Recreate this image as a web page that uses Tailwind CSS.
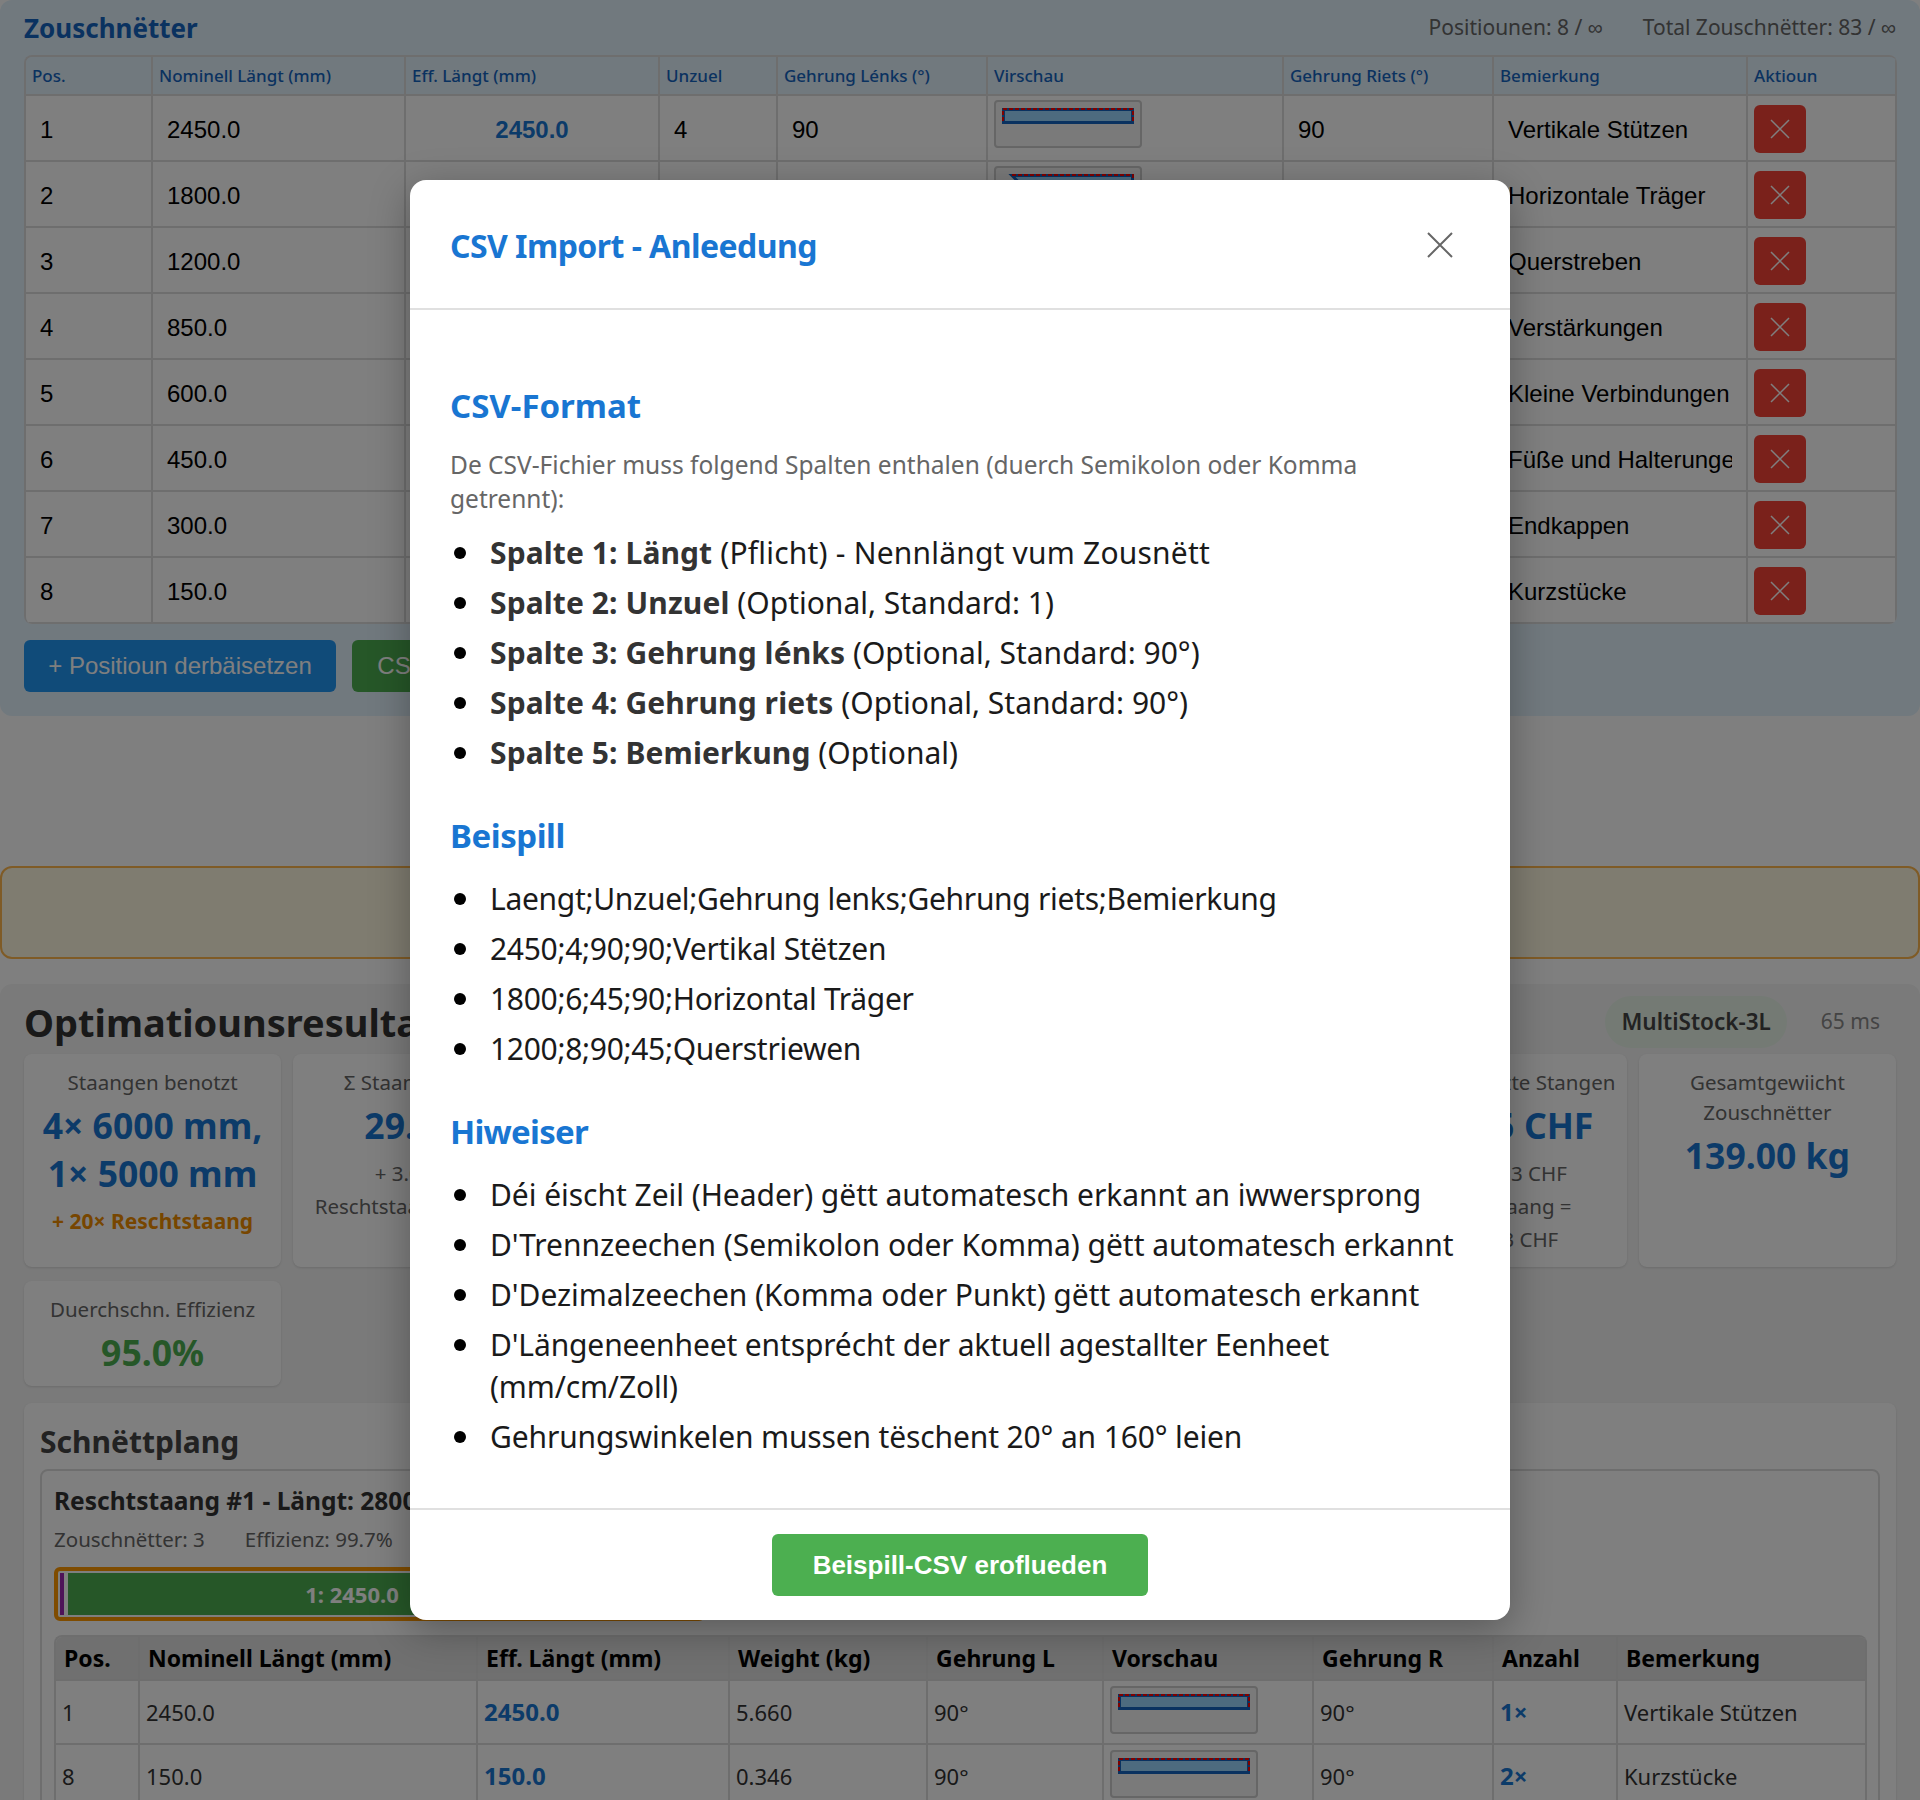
<!DOCTYPE html>
<html lang="lb">
<head>
<meta charset="UTF-8" />
<title>Zouschnëtter</title>
<script src="https://cdn.jsdelivr.net/npm/@tailwindcss/browser@4"></script>
</head>
<body class="relative h-[1800px] w-[1920px] overflow-hidden bg-white font-['Noto_Sans',sans-serif] text-[#333]">

<!-- cuts input panel -->
<section class="h-[716px] rounded-xl bg-[#e3f2fd] px-6">
  <div class="flex h-[55px] items-center justify-between">
    <h2 class="text-[26px] font-bold leading-none text-[#1565c0]">Zouschnëtter</h2>
    <div class="flex gap-10 text-[21px] text-[#666]">
      <span>Positiounen: 8 / ∞</span>
      <span>Total Zouschnëtter: 83 / ∞</span>
    </div>
  </div>
  <table class="w-[1871px] table-fixed border-separate border-spacing-0 overflow-hidden rounded-lg border-t-2 border-l-2 border-[#ddd] font-['Liberation_Sans',sans-serif] text-[24px] text-black">
    <colgroup>
      <col class="w-[127px]" /><col class="w-[253px]" /><col class="w-[254px]" /><col class="w-[118px]" /><col class="w-[210px]" /><col class="w-[296px]" /><col class="w-[210px]" /><col class="w-[254px]" /><col class="w-[149px]" />
    </colgroup>
    <thead>
      <tr class="h-[39px] bg-[#e3f2fd] text-left font-['Noto_Sans',sans-serif] text-[17px] font-medium text-[#1565c0]">
        <th class="border-r-2 border-b-2 border-[#ddd] pl-1.5 font-medium">Pos.</th>
        <th class="border-r-2 border-b-2 border-[#ddd] pl-1.5 font-medium">Nominell Längt (mm)</th>
        <th class="border-r-2 border-b-2 border-[#ddd] pl-1.5 font-medium">Eff. Längt (mm)</th>
        <th class="border-r-2 border-b-2 border-[#ddd] pl-1.5 font-medium">Unzuel</th>
        <th class="border-r-2 border-b-2 border-[#ddd] pl-1.5 font-medium">Gehrung Lénks (°)</th>
        <th class="border-r-2 border-b-2 border-[#ddd] pl-1.5 font-medium">Virschau</th>
        <th class="border-r-2 border-b-2 border-[#ddd] pl-1.5 font-medium">Gehrung Riets (°)</th>
        <th class="border-r-2 border-b-2 border-[#ddd] pl-1.5 font-medium">Bemierkung</th>
        <th class="border-r-2 border-b-2 border-[#ddd] pl-1.5 font-medium">Aktioun</th>
      </tr>
    </thead>
    <tbody class="bg-white">
      <tr class="h-[66px]">
        <td class="border-r-2 border-b-2 border-[#ddd] pl-3.5 pt-1">1</td>
        <td class="border-r-2 border-b-2 border-[#ddd] pl-3.5 pt-1">2450.0</td>
        <td class="border-r-2 border-b-2 border-[#ddd] pt-1 text-center font-bold text-[#1976d2]">2450.0</td>
        <td class="border-r-2 border-b-2 border-[#ddd] pl-3.5 pt-1">4</td>
        <td class="border-r-2 border-b-2 border-[#ddd] pl-3.5 pt-1">90</td>
        <td class="border-r-2 border-b-2 border-[#ddd] pl-1.5 pt-1 align-top">
          <div class="h-[48px] w-[148px] rounded border-2 border-[#ccc] bg-[#f5f5f5] px-[6px] pt-[6px]">
            <svg viewBox="0 0 132 16" class="block h-4 w-[132px]"><rect x="1.5" y="1.5" width="129" height="13" fill="#9bd7ff" stroke="#1565c0" stroke-width="3" /><path d="M1 13V1H131V13" fill="none" stroke="#ff0000" stroke-width="2" stroke-dasharray="4 2" /></svg>
          </div>
        </td>
        <td class="border-r-2 border-b-2 border-[#ddd] pl-3.5 pt-1">90</td>
        <td class="border-r-2 border-b-2 border-[#ddd] pl-3.5 pt-1">Vertikale Stützen</td>
        <td class="border-r-2 border-b-2 border-[#ddd] pl-1.5 pt-0.5">
          <button class="flex h-12 w-[52px] items-center justify-center rounded-md bg-[#f44336]">
            <svg viewBox="0 0 20 20" class="h-[20px] w-[20px] stroke-white stroke-[1.5]"><path d="M1 1 19 19M19 1 1 19" /></svg>
          </button>
        </td>
      </tr>
      <tr class="h-[66px]">
        <td class="border-r-2 border-b-2 border-[#ddd] pl-3.5 pt-1">2</td>
        <td class="border-r-2 border-b-2 border-[#ddd] pl-3.5 pt-1">1800.0</td>
        <td class="border-r-2 border-b-2 border-[#ddd]"></td>
        <td class="border-r-2 border-b-2 border-[#ddd]"></td>
        <td class="border-r-2 border-b-2 border-[#ddd]"></td>
        <td class="border-r-2 border-b-2 border-[#ddd] pl-1.5 pt-1 align-top">
          <div class="h-[48px] w-[148px] rounded border-2 border-[#ccc] bg-[#f5f5f5] px-[6px] pt-[6px]">
            <svg viewBox="0 0 132 16" class="block h-4 w-[132px]"><polygon points="10,1.5 130.5,1.5 130.5,14.5 23,14.5" fill="#9bd7ff" stroke="#1565c0" stroke-width="3" /><path d="M10 1H131V13" fill="none" stroke="#ff0000" stroke-width="2" stroke-dasharray="4 2" /></svg>
          </div>
        </td>
        <td class="border-r-2 border-b-2 border-[#ddd]"></td>
        <td class="border-r-2 border-b-2 border-[#ddd] pl-3.5 pt-1">Horizontale Träger</td>
        <td class="border-r-2 border-b-2 border-[#ddd] pl-1.5 pt-0.5">
          <button class="flex h-12 w-[52px] items-center justify-center rounded-md bg-[#f44336]">
            <svg viewBox="0 0 20 20" class="h-[20px] w-[20px] stroke-white stroke-[1.5]"><path d="M1 1 19 19M19 1 1 19" /></svg>
          </button>
        </td>
      </tr>
      <tr class="h-[66px]">
        <td class="border-r-2 border-b-2 border-[#ddd] pl-3.5 pt-1">3</td>
        <td class="border-r-2 border-b-2 border-[#ddd] pl-3.5 pt-1">1200.0</td>
        <td class="border-r-2 border-b-2 border-[#ddd]" colspan="5"></td>
        <td class="border-r-2 border-b-2 border-[#ddd] pl-3.5 pt-1">Querstreben</td>
        <td class="border-r-2 border-b-2 border-[#ddd] pl-1.5 pt-0.5">
          <button class="flex h-12 w-[52px] items-center justify-center rounded-md bg-[#f44336]">
            <svg viewBox="0 0 20 20" class="h-[20px] w-[20px] stroke-white stroke-[1.5]"><path d="M1 1 19 19M19 1 1 19" /></svg>
          </button>
        </td>
      </tr>
      <tr class="h-[66px]">
        <td class="border-r-2 border-b-2 border-[#ddd] pl-3.5 pt-1">4</td>
        <td class="border-r-2 border-b-2 border-[#ddd] pl-3.5 pt-1">850.0</td>
        <td class="border-r-2 border-b-2 border-[#ddd]" colspan="5"></td>
        <td class="border-r-2 border-b-2 border-[#ddd] pl-3.5 pt-1">Verstärkungen</td>
        <td class="border-r-2 border-b-2 border-[#ddd] pl-1.5 pt-0.5">
          <button class="flex h-12 w-[52px] items-center justify-center rounded-md bg-[#f44336]">
            <svg viewBox="0 0 20 20" class="h-[20px] w-[20px] stroke-white stroke-[1.5]"><path d="M1 1 19 19M19 1 1 19" /></svg>
          </button>
        </td>
      </tr>
      <tr class="h-[66px]">
        <td class="border-r-2 border-b-2 border-[#ddd] pl-3.5 pt-1">5</td>
        <td class="border-r-2 border-b-2 border-[#ddd] pl-3.5 pt-1">600.0</td>
        <td class="border-r-2 border-b-2 border-[#ddd]" colspan="5"></td>
        <td class="border-r-2 border-b-2 border-[#ddd] pl-3.5 pt-1">Kleine Verbindungen</td>
        <td class="border-r-2 border-b-2 border-[#ddd] pl-1.5 pt-0.5">
          <button class="flex h-12 w-[52px] items-center justify-center rounded-md bg-[#f44336]">
            <svg viewBox="0 0 20 20" class="h-[20px] w-[20px] stroke-white stroke-[1.5]"><path d="M1 1 19 19M19 1 1 19" /></svg>
          </button>
        </td>
      </tr>
      <tr class="h-[66px]">
        <td class="border-r-2 border-b-2 border-[#ddd] pl-3.5 pt-1">6</td>
        <td class="border-r-2 border-b-2 border-[#ddd] pl-3.5 pt-1">450.0</td>
        <td class="border-r-2 border-b-2 border-[#ddd]" colspan="5"></td>
        <td class="border-r-2 border-b-2 border-[#ddd] pl-3.5 pr-3.5 pt-1"><div class="overflow-hidden whitespace-nowrap">Füße und Halterungen</div></td>
        <td class="border-r-2 border-b-2 border-[#ddd] pl-1.5 pt-0.5">
          <button class="flex h-12 w-[52px] items-center justify-center rounded-md bg-[#f44336]">
            <svg viewBox="0 0 20 20" class="h-[20px] w-[20px] stroke-white stroke-[1.5]"><path d="M1 1 19 19M19 1 1 19" /></svg>
          </button>
        </td>
      </tr>
      <tr class="h-[66px]">
        <td class="border-r-2 border-b-2 border-[#ddd] pl-3.5 pt-1">7</td>
        <td class="border-r-2 border-b-2 border-[#ddd] pl-3.5 pt-1">300.0</td>
        <td class="border-r-2 border-b-2 border-[#ddd]" colspan="5"></td>
        <td class="border-r-2 border-b-2 border-[#ddd] pl-3.5 pt-1">Endkappen</td>
        <td class="border-r-2 border-b-2 border-[#ddd] pl-1.5 pt-0.5">
          <button class="flex h-12 w-[52px] items-center justify-center rounded-md bg-[#f44336]">
            <svg viewBox="0 0 20 20" class="h-[20px] w-[20px] stroke-white stroke-[1.5]"><path d="M1 1 19 19M19 1 1 19" /></svg>
          </button>
        </td>
      </tr>
      <tr class="h-[66px]">
        <td class="border-r-2 border-b-2 border-[#ddd] pl-3.5 pt-1">8</td>
        <td class="border-r-2 border-b-2 border-[#ddd] pl-3.5 pt-1">150.0</td>
        <td class="border-r-2 border-b-2 border-[#ddd]" colspan="5"></td>
        <td class="border-r-2 border-b-2 border-[#ddd] pl-3.5 pt-1">Kurzstücke</td>
        <td class="border-r-2 border-b-2 border-[#ddd] pl-1.5 pt-0.5">
          <button class="flex h-12 w-[52px] items-center justify-center rounded-md bg-[#f44336]">
            <svg viewBox="0 0 20 20" class="h-[20px] w-[20px] stroke-white stroke-[1.5]"><path d="M1 1 19 19M19 1 1 19" /></svg>
          </button>
        </td>
      </tr>
    </tbody>
  </table>
  <div class="mt-4 flex gap-4 font-['Liberation_Sans',sans-serif] text-[24px] text-white">
    <button class="h-[52px] w-[312px] rounded-md bg-[#2196f3]">+ Positioun derbäisetzen</button>
    <button class="h-[52px] w-[200px] rounded-md bg-[#4caf50] pr-[100px]">CSV</button>
  </div>
</section>

<!-- warning -->
<div class="mt-[150px] h-[93px] rounded-xl border-2 border-[#ffb74d] bg-[#fff8e1]"></div>

<!-- results -->
<section class="mt-[25px] rounded-xl bg-[#f5f5f5] px-6 pt-[14px]">
  <div class="flex h-[56px] items-center justify-between pb-2">
    <h2 class="text-[38px] font-bold text-[#333]">Optimatiounsresultater</h2>
    <div class="flex items-center gap-[34px] pr-4">
      <span class="rounded-full bg-[#e8f5e9] px-4 py-[9px] text-[22.5px] font-semibold text-[#444]">MultiStock-3L</span>
      <span class="text-[21px] text-[#888]">65 ms</span>
    </div>
  </div>
  <div class="grid grid-cols-7 gap-x-3 gap-y-[14px]">
    <div class="h-[213px] rounded-lg bg-white px-2 pt-[13px] text-center text-[20.5px] leading-[30px] text-[#666] shadow-sm">
      <div>Staangen benotzt</div>
      <div class="mt-1 text-[35.5px] leading-[48px] font-bold text-[#1976d2]">4× 6000 mm, 1× 5000 mm</div>
      <div class="mt-[9px] text-[21px] font-bold text-[#ef8c00]">+ 20× Reschtstaang</div>
    </div>
    <div class="h-[213px] rounded-lg bg-white px-2 pt-[13px] text-center text-[20.5px] leading-[30px] text-[#666] shadow-sm">
      <div>Σ Staange Längt</div>
      <div class="mt-1 text-[35.5px] leading-[48px] font-bold text-[#1976d2]">29.0 m</div>
      <div class="mt-2 leading-[33px]">+ 3.000 m<br />Reschtstaangen Längt</div>
    </div>
    <div class="rounded-lg bg-white shadow-sm"></div>
    <div class="rounded-lg bg-white shadow-sm"></div>
    <div class="rounded-lg bg-white shadow-sm"></div>
    <div class="h-[213px] rounded-lg bg-white px-1 pt-[13px] text-center text-[20.5px] leading-[30px] text-[#666] shadow-sm">
      <div class="whitespace-nowrap">Präise benotzte Stangen</div>
      <div class="mt-1 text-[35.5px] leading-[48px] font-bold text-[#1976d2]">1185.5 CHF</div>
      <div class="mt-2 leading-[33px]">+ 1124.13 CHF<br />Reschtstaang =<br />1564.13 CHF</div>
    </div>
    <div class="h-[213px] rounded-lg bg-white px-2 pt-[13px] text-center text-[20.5px] leading-[30px] text-[#666] shadow-sm">
      <div>Gesamtgewiicht Zouschnëtter</div>
      <div class="mt-1 text-[35.5px] leading-[48px] font-bold text-[#1976d2]">139.00 kg</div>
    </div>
    <div class="h-[105px] rounded-lg bg-white px-2 pt-[13px] text-center text-[20.5px] leading-[30px] text-[#666] shadow-sm">
      <div>Duerchschn. Effizienz</div>
      <div class="mt-1 text-[35.5px] leading-[48px] font-bold text-[#4caf50]">95.0%</div>
    </div>
  </div>

  <div class="mt-[17px] rounded-lg bg-white px-4 pt-[18px] pb-10 shadow-sm">
    <h3 class="text-[30px] leading-[42px] font-bold text-[#444]">Schnëttplang</h3>
    <div class="mt-1.5 h-[400px] rounded-lg border-2 border-[#ddd] px-3 pt-[14px]">
      <div class="text-[24.5px] leading-[32px] font-bold text-[#333]">Reschtstaang #1 - Längt: 2800 mm</div>
      <div class="mt-[7px] flex gap-10 text-[20.5px] leading-[30px] text-[#666]"><span>Zouschnëtter: 3</span><span>Effizienz: 99.7%</span></div>
      <div class="mt-[13px] flex h-[54px] w-[651px] items-stretch rounded-md border-4 border-[#ff9800] bg-white p-[2px]">
        <div class="w-[4px] bg-[#9c27b0]"></div>
        <div class="ml-1 flex w-[568px] items-center justify-center bg-[#4caf50] text-[22px] font-bold text-white">1: 2450.0</div>
      </div>
      <table class="mt-[14px] w-[1811px] table-fixed border-separate border-spacing-0 overflow-hidden rounded-lg border-t-2 border-l-2 border-[#ddd] text-[22px] text-[#333]">
        <colgroup>
          <col class="w-[84px]" /><col class="w-[338px]" /><col class="w-[252px]" /><col class="w-[198px]" /><col class="w-[176px]" /><col class="w-[210px]" /><col class="w-[180px]" /><col class="w-[124px]" /><col class="w-[249px]" />
        </colgroup>
        <thead>
          <tr class="h-[44px] bg-[#e0e0e0] text-left text-[23px] text-black">
            <th class="border-r-2 border-b-2 border-[#ddd] pl-2">Pos.</th>
            <th class="border-r-2 border-b-2 border-[#ddd] pl-2">Nominell Längt (mm)</th>
            <th class="border-r-2 border-b-2 border-[#ddd] pl-2">Eff. Längt (mm)</th>
            <th class="border-r-2 border-b-2 border-[#ddd] pl-2">Weight (kg)</th>
            <th class="border-r-2 border-b-2 border-[#ddd] pl-2">Gehrung L</th>
            <th class="border-r-2 border-b-2 border-[#ddd] pl-2">Vorschau</th>
            <th class="border-r-2 border-b-2 border-[#ddd] pl-2">Gehrung R</th>
            <th class="border-r-2 border-b-2 border-[#ddd] pl-2">Anzahl</th>
            <th class="border-r-2 border-b-2 border-[#ddd] pl-2">Bemerkung</th>
          </tr>
        </thead>
        <tbody class="bg-white">
          <tr class="h-[64px]">
            <td class="border-r-2 border-b-2 border-[#ddd] pl-1.5">1</td>
            <td class="border-r-2 border-b-2 border-[#ddd] pl-1.5">2450.0</td>
            <td class="border-r-2 border-b-2 border-[#ddd] pl-1.5 text-[24px] font-bold text-[#1976d2]">2450.0</td>
            <td class="border-r-2 border-b-2 border-[#ddd] pl-1.5">5.660</td>
            <td class="border-r-2 border-b-2 border-[#ddd] pl-1.5">90°</td>
            <td class="border-r-2 border-b-2 border-[#ddd] pl-1.5 pt-[5px] align-top">
              <div class="h-[48px] w-[148px] rounded border-2 border-[#ccc] bg-[#f5f5f5] px-[6px] pt-[6px]">
                <svg viewBox="0 0 132 16" class="block h-4 w-[132px]"><rect x="1.5" y="1.5" width="129" height="13" fill="#9bd7ff" stroke="#1565c0" stroke-width="3" /><path d="M1 13V1H131V13" fill="none" stroke="#ff0000" stroke-width="2" stroke-dasharray="4 2" /></svg>
              </div>
            </td>
            <td class="border-r-2 border-b-2 border-[#ddd] pl-1.5">90°</td>
            <td class="border-r-2 border-b-2 border-[#ddd] pl-1.5 text-[24px] font-bold text-[#1976d2]">1×</td>
            <td class="border-r-2 border-b-2 border-[#ddd] pl-1.5">Vertikale Stützen</td>
          </tr>
          <tr class="h-[64px]">
            <td class="border-r-2 border-b-2 border-[#ddd] pl-1.5">8</td>
            <td class="border-r-2 border-b-2 border-[#ddd] pl-1.5">150.0</td>
            <td class="border-r-2 border-b-2 border-[#ddd] pl-1.5 text-[24px] font-bold text-[#1976d2]">150.0</td>
            <td class="border-r-2 border-b-2 border-[#ddd] pl-1.5">0.346</td>
            <td class="border-r-2 border-b-2 border-[#ddd] pl-1.5">90°</td>
            <td class="border-r-2 border-b-2 border-[#ddd] pl-1.5 pt-[5px] align-top">
              <div class="h-[48px] w-[148px] rounded border-2 border-[#ccc] bg-[#f5f5f5] px-[6px] pt-[6px]">
                <svg viewBox="0 0 132 16" class="block h-4 w-[132px]"><rect x="1.5" y="1.5" width="129" height="13" fill="#9bd7ff" stroke="#1565c0" stroke-width="3" /><path d="M1 13V1H131V13" fill="none" stroke="#ff0000" stroke-width="2" stroke-dasharray="4 2" /></svg>
              </div>
            </td>
            <td class="border-r-2 border-b-2 border-[#ddd] pl-1.5">90°</td>
            <td class="border-r-2 border-b-2 border-[#ddd] pl-1.5 text-[24px] font-bold text-[#1976d2]">2×</td>
            <td class="border-r-2 border-b-2 border-[#ddd] pl-1.5">Kurzstücke</td>
          </tr>
        </tbody>
      </table>
    </div>
  </div>
</section>

<!-- dimming overlay and modal -->
<div class="absolute inset-0 flex justify-center bg-black/50 pt-[180px]">
  <div class="flex h-[1440px] w-[1100px] flex-col rounded-2xl bg-white shadow-[0_10px_40px_rgba(0,0,0,0.3)]">
    <div class="flex h-[130px] shrink-0 items-center justify-between border-b-2 border-[#e0e0e0] pr-[57px] pl-10">
      <h2 class="mt-[4px] text-[32px] font-bold tracking-[-0.55px] text-[#1976d2]">CSV Import - Anleedung</h2>
      <svg viewBox="0 0 26 26" class="mt-[2px] h-[26px] w-[26px] fill-none stroke-[#666] stroke-2"><path d="M1 1 25 25M25 1 1 25" /></svg>
    </div>
    <div class="flex-1 px-10 pt-[74px]">
      <h3 class="text-[33px] leading-[44px] font-bold text-[#1976d2]">CSV-Format</h3>
      <p class="mt-[20px] text-[24.5px] leading-[34px] text-[#666]">De CSV-Fichier muss folgend Spalten enthalen (duerch Semikolon oder Komma getrennt):</p>
      <ul class="mt-[16px] pl-10 text-[30px] leading-[42px] text-[#1a1a1a] *:relative *:mb-2 *:before:absolute *:before:top-[15px] *:before:left-[-36px] *:before:h-3 *:before:w-3 *:before:rounded-full *:before:bg-black">
        <li class="tracking-[0.2px]"><strong class="font-bold tracking-[0.1px] text-[#333]">Spalte 1: Längt</strong> (Pflicht) - Nennlängt vum Zousnëtt</li>
        <li><strong class="font-bold tracking-[0.1px] text-[#333]">Spalte 2: Unzuel</strong> (Optional, Standard: 1)</li>
        <li><strong class="font-bold tracking-[0.1px] text-[#333]">Spalte 3: Gehrung lénks</strong> (Optional, Standard: 90°)</li>
        <li><strong class="font-bold tracking-[0.1px] text-[#333]">Spalte 4: Gehrung riets</strong> (Optional, Standard: 90°)</li>
        <li><strong class="font-bold tracking-[0.1px] text-[#333]">Spalte 5: Bemierkung</strong> (Optional)</li>
      </ul>
      <h3 class="mt-[40px] text-[33px] leading-[44px] font-bold tracking-[-0.45px] text-[#1976d2]">Beispill</h3>
      <ul class="mt-[20px] pl-10 text-[30px] leading-[42px] tracking-[-0.3px] text-[#1a1a1a] *:relative *:mb-2 *:before:absolute *:before:top-[15px] *:before:left-[-36px] *:before:h-3 *:before:w-3 *:before:rounded-full *:before:bg-black">
        <li>Laengt;Unzuel;Gehrung lenks;Gehrung riets;Bemierkung</li>
        <li>2450;4;90;90;Vertikal Stëtzen</li>
        <li>1800;6;45;90;Horizontal Träger</li>
        <li>1200;8;90;45;Querstriewen</li>
      </ul>
      <h3 class="mt-[40px] text-[33px] leading-[44px] font-bold tracking-[-0.75px] text-[#1976d2]">Hiweiser</h3>
      <ul class="mt-[20px] pl-10 text-[30px] leading-[42px] tracking-[-0.04px] text-[#1a1a1a] *:relative *:mb-2 *:before:absolute *:before:top-[15px] *:before:left-[-36px] *:before:h-3 *:before:w-3 *:before:rounded-full *:before:bg-black">
        <li>Déi éischt Zeil (Header) gëtt automatesch erkannt an iwwersprong</li>
        <li>D'Trennzeechen (Semikolon oder Komma) gëtt automatesch erkannt</li>
        <li>D'Dezimalzeechen (Komma oder Punkt) gëtt automatesch erkannt</li>
        <li class="tracking-[-0.14px]">D'Längeneenheet entsprécht der aktuell agestallter Eenheet (mm/cm/Zoll)</li>
        <li class="tracking-[-0.14px]">Gehrungswinkelen mussen tëschent 20° an 160° leien</li>
      </ul>
    </div>
    <div class="flex h-[112px] shrink-0 items-center justify-center border-t-2 border-[#e0e0e0]">
      <button class="h-[62px] w-[376px] rounded-md bg-[#4caf50] font-['Liberation_Sans',sans-serif] text-[26px] font-bold text-white">Beispill-CSV eroflueden</button>
    </div>
  </div>
</div>
</body>
</html>
